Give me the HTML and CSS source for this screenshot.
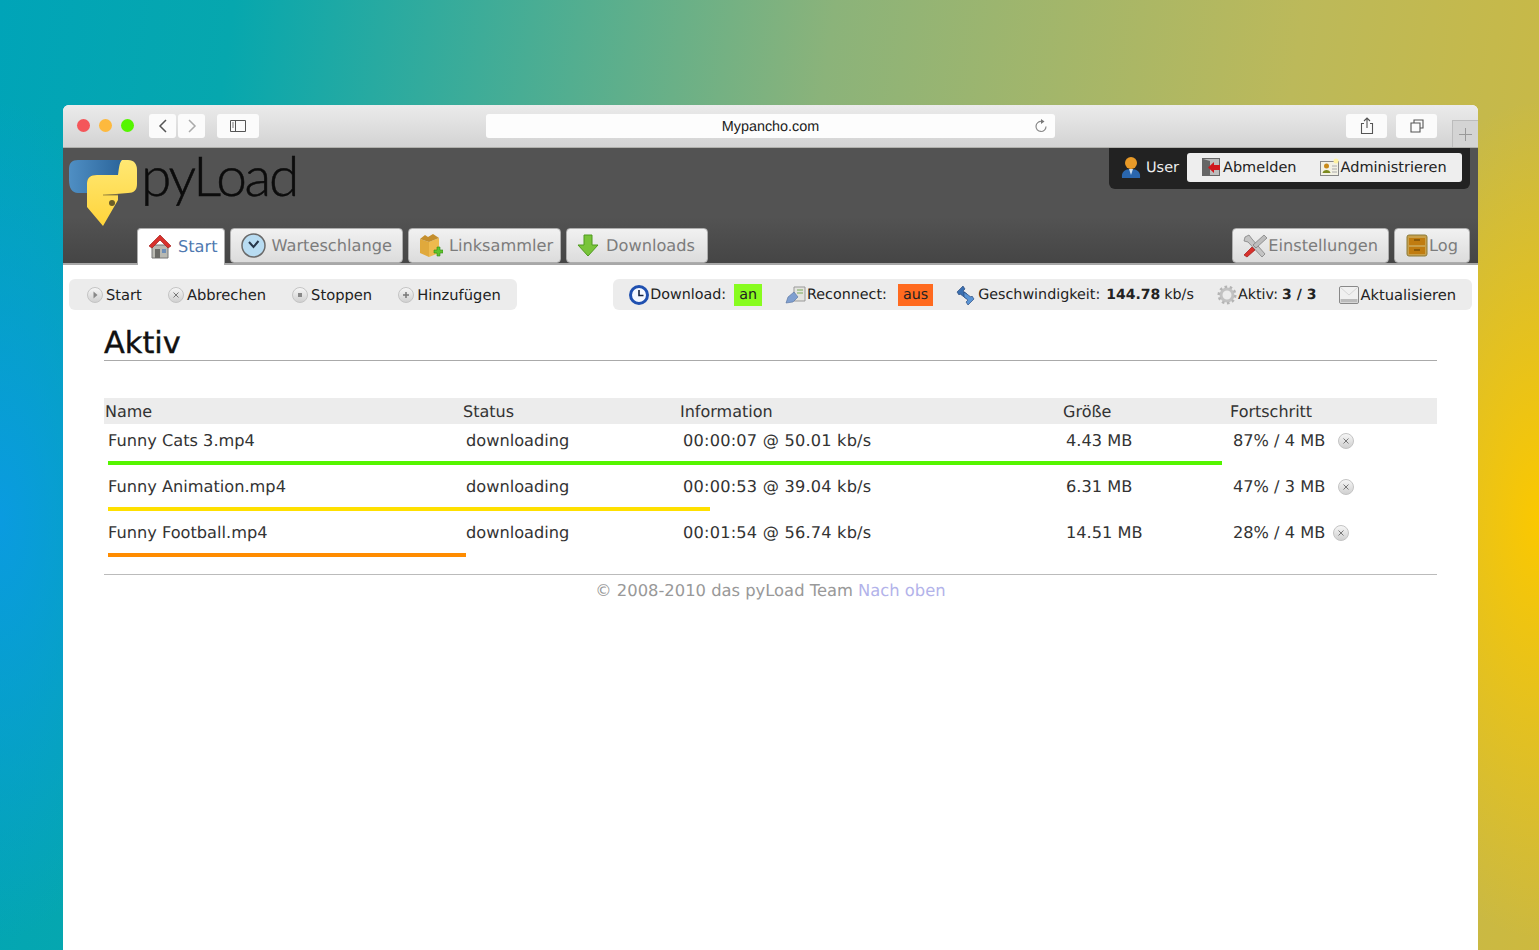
FILE: index.html
```html
<!DOCTYPE html>
<html>
<head>
    <meta charset="utf-8">
    <title>pyLoad</title>
    <link rel="stylesheet" href="styles.css">
</head>
<body>
    <div class="window">
        <div class="titlebar">
            <span class="light red"></span>
            <span class="light yellow"></span>
            <span class="light green"></span>
            <div class="navBtn first"><svg width="12" height="16" viewBox="0 0 12 16"><path d="M9 2 L3 8 L9 14" fill="none" stroke="#555" stroke-width="1.5"/></svg></div>
            <div class="navBtn"><svg width="12" height="16" viewBox="0 0 12 16"><path d="M3 2 L9 8 L3 14" fill="none" stroke="#aaa" stroke-width="1.5"/></svg></div>
            <div class="navBtn sidebar"><svg width="18" height="14" viewBox="0 0 18 14"><path d="M1.5 1.5 H16.5 V12.5 H1.5 Z M6.5 1.5 V12.5" fill="none" stroke="#555" stroke-width="1"/><path d="M3 4 H5 M3 6 H5 M3 8 H5" stroke="#777" stroke-width="1"/></svg></div>
            <div class="address">
                <span class="url">Mypancho.com</span>
                <svg class="reload" width="16" height="16" viewBox="0 0 16 16"><path d="M8.5 3.5 A5 5 0 1 0 13 8.5" fill="none" stroke="#888" stroke-width="1.2"/><path d="M8 1 L11.5 3.5 L8 6 Z" fill="#777"/></svg>
            </div>
            <div class="navBtn share"><svg width="16" height="18" viewBox="0 0 16 18"><path d="M5 6.5 H2.5 V16.5 H13.5 V6.5 H11 M8 11 V1.5 M5 4 L8 1 L11 4" fill="none" stroke="#555" stroke-width="1.1"/></svg></div>
            <div class="navBtn tabsBtn"><svg width="16" height="16" viewBox="0 0 16 16"><path d="M5 4.5 V2 H14 V10 H11 M2 5 H11 V14 H2 Z" fill="none" stroke="#555" stroke-width="1.1"/></svg></div>
            <div class="newTab"><svg width="13" height="13" viewBox="0 0 13 13"><path d="M6.5 0 V13 M0 6.5 H13" stroke="#999" stroke-width="1"/></svg></div>
        </div>

        <div class="header">
            <div class="headTop">
                <div class="logo">
                    <svg width="70" height="68" viewBox="0 0 70 68">
                        <defs>
                            <linearGradient id="pyBlue" x1="0" y1="0" x2="1" y2="0"><stop offset="0" stop-color="#4f8fc4"/><stop offset="1" stop-color="#2a6399"/></linearGradient>
                            <linearGradient id="pyYellow" x1="0" y1="0" x2="0" y2="1"><stop offset="0" stop-color="#ffe873"/><stop offset="1" stop-color="#ffd43b"/></linearGradient>
                        </defs>
                        <path d="M9 0 H55 L51 15 H28 C21 15 18 18 18 24 V33 H9 C3 33 0 28 0 20 V9 C0 3 3 0 9 0 Z" fill="url(#pyBlue)"/>
                        <path d="M53 0 H59 C65 0 68 4 68 10 V24 C68 30 65 33 59 33 L35 35 H49 V40 L34 66 L18 47 V24 C18 18 21 15 28 15 H49 C50 9 50 3 53 0 Z" fill="url(#pyYellow)"/>
                        <path d="M34 35 H49" stroke="#a08a3a" stroke-width="1"/>
                        <circle cx="43" cy="43" r="3" fill="#6a5d2a"/>
                    </svg>
                    <span class="logoText">pyLoad</span>
                </div>
                <div class="login">
                    <svg width="20" height="23" viewBox="0 0 20 23"><path d="M1 22 C0 16 4 13 10 13 C16 13 20 16 19 22 Z" fill="#2a66ad"/><path d="M8 13 L10 19 L12 13 Z" fill="#cfe0f0"/><circle cx="10" cy="7" r="6" fill="#e89a28"/></svg>
                    <span class="loginName">User</span>
                    <div class="loginLinks">
                        <a class="loginLink">
                            <svg width="19" height="19" viewBox="0 0 19 19"><rect x="0.5" y="0.5" width="17" height="17" fill="#bbb" stroke="#666"/><path d="M1 1 L8 3 V18 H1 Z" fill="#666"/><path d="M18 7 H12 V4 L6 9.5 L12 15 V12 H18 Z" fill="#d0161b"/></svg>Abmelden
                        </a>
                        <a class="loginLink">
                            <svg width="20" height="19" viewBox="0 0 20 19"><rect x="0.5" y="3.5" width="18" height="14" fill="#f3f1e4" stroke="#888"/><circle cx="6.5" cy="8" r="2.5" fill="#c98a1a"/><path d="M2.5 15 C3 11 10 11 10.500 15 Z" fill="#7c8a1e"/><path d="M12 8 H17 M12 11 H17 M12 14 H17" stroke="#aaa"/><circle cx="16" cy="3" r="2.500" fill="#fff2a0"/></svg>Administrieren
                        </a>
                    </div>
                </div>
            </div>
            <div class="tabs">
                <a class="tab active">
                    <svg width="24" height="25" viewBox="0 0 24 25"><path d="M4 11 H20 V24 H4 Z" fill="#b9b9b2" stroke="#777"/><rect x="7" y="15" width="5" height="9" fill="#6a6a66"/><rect x="14" y="15" width="4" height="4" fill="#6f8fb8"/><path d="M12 1 L23 12 L20 14 L12 6 L4 14 L1 12 Z" fill="#d8312c" stroke="#a51d1a" stroke-width="0.7"/></svg>
                    Start
                </a>
                <a class="tab">
                    <svg width="25" height="25" viewBox="0 0 25 25"><circle cx="12.500" cy="12.500" r="11.500" fill="#b8dcf2" stroke="#6a6a6a" stroke-width="1.500"/><path d="M8 9 L12.500 14 L17.500 8" fill="none" stroke="#26364a" stroke-width="2"/></svg>
                    Warteschlange
                </a>
                <a class="tab links">
                    <svg width="24" height="25" viewBox="0 0 24 25"><path d="M1 6 L10 9 V24 L1 20 Z" fill="#e0a93c"/><path d="M10 9 L20 5 V20 L10 24 Z" fill="#eeba4e"/><path d="M1 6 L6 2 L9 4 L14 1 L20 5 L10 9 Z" fill="#c48e2c"/><path d="M15 17 H18 V14 H21 V17 H24 V20 H21 V23 H18 V20 H15 Z" fill="#5fc42c" stroke="#2f8a14" stroke-width="0.600"/></svg>
                    Linksammler
                </a>
                <a class="tab downloads">
                    <svg width="22" height="23" viewBox="0 0 22 23"><path d="M7 1 H15 V11 H21 L11 22 L1 11 H7 Z" fill="#79c43a" stroke="#4f9a1e"/></svg>
                    Downloads
                </a>
                <span class="tabGap"></span>
                <a class="tab settings">
                    <svg width="26" height="24" viewBox="0 0 26 24"><path d="M3 3 L7 1 L10 5 L23 20 L20 23 L6 8 L2 7 Z" fill="#c4c4c4" stroke="#777" stroke-width="0.700"/><path d="M22 1 L25 4 L14 14 L11 11 Z" fill="#bdbdbd" stroke="#777" stroke-width="0.700"/><path d="M10 13 L13 16 L5 23 L2 21 Z" fill="#d8312c" stroke="#9c1a18" stroke-width="0.700"/></svg>Einstellungen
                </a>
                <a class="tab log">
                    <svg width="22" height="23" viewBox="0 0 22 23"><rect x="1" y="1" width="20" height="21" rx="2" fill="#c9a04a" stroke="#8a7a3a"/><rect x="3" y="4" width="16" height="7" fill="#c07c10"/><rect x="3" y="13" width="16" height="7" fill="#c07c10"/><path d="M8 6 H14 M8 16 H14" stroke="#5a3a00"/></svg>Log
                </a>
            </div>
        </div>

        <div class="toolRow">
            <div class="toolBar">
                <a class="tool">
                    <svg class="round"><use href="#roundBase"/><path d="M6.500 4.500 L10.500 8 L6.500 11.500 Z" fill="#888"/></svg>Start
                </a>
                <a class="tool">
                    <svg class="round"><use href="#roundBase"/><path d="M5.500 5.500 L10.500 10.500 M10.500 5.500 L5.500 10.500" stroke="#777" stroke-width="1"/></svg>Abbrechen
                </a>
                <a class="tool">
                    <svg class="round"><use href="#roundBase"/><rect x="6" y="6" width="4" height="4" fill="#888"/></svg>Stoppen
                </a>
                <a class="tool">
                    <svg class="round"><use href="#roundBase"/><path d="M8 5 V11 M5 8 H11" stroke="#777" stroke-width="1.500"/></svg>Hinzufügen
                </a>
            </div>
            <div class="toolBar status">
                <span class="stat">
                    <svg width="20" height="20" viewBox="0 0 20 20"><circle cx="10" cy="10" r="8.500" fill="#f4f8ff" stroke="#1f50b0" stroke-width="3"/><path d="M10 5 V10.500 H14.500" fill="none" stroke="#16233f" stroke-width="1.600"/></svg>Download:
                    <em class="flag on">an</em>
                </span>
                <span class="stat">
                    <svg width="21" height="18" viewBox="0 0 21 18"><path d="M9 1 H20 V15 H9 Z" fill="#e4e4e0" stroke="#999"/><path d="M12 4 H18 M12 7 H18" stroke="#7aaa58"/><path d="M1 17 L3 11 L9 6 L13 11 L8 16 Z" fill="#7f9fd0" stroke="#55709c" stroke-width="0.600"/></svg>Reconnect:
                    <em class="flag off">aus</em>
                </span>
                <span class="stat">
                    <svg class="arrows" width="19" height="19" viewBox="0 0 19 19"><path d="M1 6 L7 0 L9 3 L7 5 L11 8 V13 L4 8 L3 9 Z" fill="#3a6fb0" stroke="#1e3e70" stroke-width="0.600"/><path d="M18 13 L12 19 L10 16 L12 14 L8 11 V6 L15 11 L16 10 Z" fill="#5a94d4" stroke="#1e3e70" stroke-width="0.600"/></svg>Geschwindigkeit:<b class="val speed">144.78</b> kb/s
                </span>
                <span class="stat">
                    <svg width="20" height="20" viewBox="0 0 20 20"><circle cx="10" cy="10" r="6" fill="none" stroke="#c2c2c2" stroke-width="3"/><circle cx="10" cy="10" r="8.300" fill="none" stroke="#b4b4b4" stroke-width="2.400" stroke-dasharray="2.600 2.600"/></svg>Aktiv:<b class="val">3 / 3</b>
                </span>
                <span class="stat refresh">
                    <svg width="20" height="18" viewBox="0 0 20 18"><rect x="0.500" y="0.500" width="19" height="17" rx="1.500" fill="#f0f0f0" stroke="#888"/><path d="M1 1 L10 9 L19 1" fill="none" stroke="#d5d5d5"/><rect x="1.500" y="13" width="17" height="3.500" fill="#bbb"/></svg>Aktualisieren
                </span>
            </div>
        </div>

        <div class="content">
            <h1>Aktiv</h1>
            <table class="queue">
                <colgroup>
                    <col class="colName"><col class="colStatus"><col class="colInfo"><col class="colSize"><col class="colProgress">
                </colgroup>
                <thead>
                    <tr><th>Name</th><th>Status</th><th>Information</th><th>Größe</th><th>Fortschritt</th></tr>
                </thead>
                <tbody>
                    <tr class="row">
                        <td>Funny Cats 3.mp4</td><td>downloading</td><td class="info">00:00:07 @ 50.01 kb/s</td><td>4.43 MB</td>
                        <td>87% / 4 MB<svg class="round rowBtn"><use href="#roundBase"/><path d="M5.500 5.500 L10.500 10.500 M10.500 5.500 L5.500 10.500" stroke="#777"/></svg></td>
                    </tr>
                    <tr class="barRow"><td colspan="5"><div class="bar green" style="width: 87%"></div></td></tr>
                    <tr class="row">
                        <td>Funny Animation.mp4</td><td>downloading</td><td class="info">00:00:53 @ 39.04 kb/s</td><td>6.31 MB</td>
                        <td>47% / 3 MB<svg class="round rowBtn"><use href="#roundBase"/><path d="M5.500 5.500 L10.500 10.500 M10.500 5.500 L5.500 10.500" stroke="#777"/></svg></td>
                    </tr>
                    <tr class="barRow"><td colspan="5"><div class="bar gold" style="width: 47%"></div></td></tr>
                    <tr class="row">
                        <td>Funny Football.mp4</td><td>downloading</td><td class="info">00:01:54 @ 56.74 kb/s</td><td>14.51 MB</td>
                        <td>28% / 4 MB<svg class="round rowBtn near"><use href="#roundBase"/><path d="M5.500 5.500 L10.500 10.500 M10.500 5.500 L5.500 10.500" stroke="#777"/></svg></td>
                    </tr>
                    <tr class="barRow"><td colspan="5"><div class="bar orange" style="width: 28%"></div></td></tr>
                </tbody>
            </table>
            <div class="footer">© 2008-2010 das pyLoad Team <a class="topLink">Nach oben</a></div>
        </div>
    </div>

    <svg class="defs" width="0" height="0">
        <defs>
            <linearGradient id="roundFill" x1="0" y1="0" x2="0" y2="1"><stop offset="0" stop-color="#f7f7f7"/><stop offset="1" stop-color="#cfcfcf"/></linearGradient>
            <g id="roundBase"><circle cx="8" cy="8" r="7.500" fill="url(#roundFill)" stroke="#c4c4c4"/></g>
        </defs>
    </svg>
</body>
</html>
```

FILE: styles.css
```css
html, body {
    margin: 0;
    height: 950px;
    overflow: hidden;
}

body {
    font-family: "DejaVu Sans", sans-serif;
    font-size: 14.5px;
    text-rendering: geometricPrecision;
    color: #222;
    padding: 105px 61px 0 63px;
    box-sizing: border-box;
    background:
        radial-gradient(ellipse 170px 420px at 0 520px, #0a9be0 0%, rgba(10,155,224,0) 100%),
        radial-gradient(ellipse 190px 420px at 100% 520px, #fbc800 0%, rgba(251,200,0,0) 100%),
        linear-gradient(98deg, #00a4b8 0%, #06a7ae 14%, #8bb37a 50%, #bcb95a 78%, #cdb93e 100%);
}

svg { flex-shrink: 0; }

.window {
    height: 845px;
    background-color: #fff;
    border-radius: 6px 6px 0 0;
    overflow: hidden;
}

/* browser chrome */
.titlebar {
    display: flex;
    align-items: flex-start;
    height: 43px;
    box-sizing: border-box;
    padding-top: 9px;
    background: linear-gradient(#ebebeb, #d3d3d3);
    border-bottom: 1px solid #b0b0ac;
}

.light {
    width: 13px;
    height: 13px;
    border-radius: 50%;
    margin-top: 5px;
    margin-right: 9px;
}
.light:first-child { margin-left: 14px; }
.red { background-color: #f4565a; }
.yellow { background-color: #fdb93d; }
.green { background-color: #33c748; }

.navBtn {
    display: flex;
    align-items: center;
    justify-content: center;
    width: 27px;
    height: 24px;
    margin-right: 2px;
    background-color: #fbfbfb;
    border-radius: 3px;
}
.navBtn.first { margin-left: 6px; }
.navBtn.sidebar { width: 42px; margin-left: 10px; margin-right: 0; }
.navBtn.share { width: 41px; margin-left: 291px; margin-right: 9px; }
.navBtn.tabsBtn { width: 41px; margin-right: 15px; }

.address {
    display: flex;
    align-items: center;
    position: relative;
    justify-content: center;
    width: 569px;
    height: 24px;
    margin-left: 227px;
    background-color: #fdfdfd;
    border-radius: 3px;
}
.url {
    font-family: "Liberation Sans", sans-serif;
    font-size: 14.4px;
    color: #222;
    margin-top: 2px;
}
.reload {
    position: absolute;
    right: 6px;
    top: 4px;
}

.newTab {
    display: flex;
    align-items: center;
    justify-content: center;
    width: 26px;
    height: 27px;
    margin-top: 6px;
    background-color: #d4d4d4;
    border: 1px solid #bcbcbc;
    border-right: 0;
    border-bottom: 0;
    box-sizing: border-box;
}

/* pyload header */
.header {
    height: 115px;
    background: linear-gradient(#535353 0%, #535353 60%, #454545 100%);
    border-bottom: 2px solid #a8a8a8;
}

.headTop {
    display: flex;
    justify-content: space-between;
    height: 80px;
    padding: 0 8px 0 6px;
}

.logo {
    display: flex;
    align-items: flex-start;
    padding-top: 12px;
}
.logoText {
    font-family: "Lato", sans-serif;
    font-weight: 300;
    font-size: 55px;
    line-height: 50px;
    color: #0c0c0c;
    margin: -10px 0 0 2px;
    letter-spacing: -2.2px;
    -webkit-text-stroke: 0.5px #0c0c0c;
}

.login {
    display: flex;
    align-items: center;
    height: 41px;
    width: 361px;
    box-sizing: border-box;
    padding: 5px 8px 7px 12px;
    background-color: #222;
    border-radius: 0 0 6px 6px;
}
.loginName {
    width: 34px;
    color: #eee;
    margin-left: 5px;
    margin-right: 7px;
}
.loginLinks {
    display: flex;
    align-items: center;
    flex: 1;
    height: 29px;
    padding-left: 15px;
    background-color: #eee;
    border-radius: 3px;
}
.loginLink {
    display: flex;
    align-items: center;
    gap: 2px;
    margin-right: 23px;
    color: #222;
}
.loginLink:last-child { margin-right: 0; gap: 1px; }

.tabs {
    display: flex;
    align-items: flex-start;
    gap: 5px;
    padding: 0 8px 0 74px;
}
.tabGap { flex: 1; }

.tab {
    display: flex;
    align-items: center;
    gap: 6px;
    height: 35px;
    box-sizing: border-box;
    padding: 0 10px;
    font-size: 16.2px;
    color: #7c7c7c;
    background: linear-gradient(#f1f1f1, #dcdcdc);
    border: 1px solid #adadad;
    border-radius: 4px;
}
.tab.active {
    height: 37px;
    padding: 0 6px 2px 10px;
    color: #4f79b0;
    background: #fff;
    border-bottom: 0;
    border-radius: 4px 4px 0 0;
}
.tab.links { padding-right: 7px; }
.tab.downloads { gap: 7px; padding-right: 12px; }
.tab.settings { gap: 0; padding: 0 10px 0 9px; }
.tab.log { gap: 1px; padding: 0 11px; }

/* toolbars */
.toolRow {
    display: flex;
    justify-content: space-between;
    padding: 14px 6px 0 6px;
}

.toolBar {
    display: flex;
    align-items: center;
    height: 31px;
    box-sizing: border-box;
    padding: 1px 16px 0 18px;
    gap: 26px;
    font-size: 14.7px;
    background-color: #ececec;
    border-radius: 6px;
}
.toolBar.status {
    gap: 23px;
    padding-left: 16px;
    font-size: 14.3px;
}

.tool, .stat {
    display: flex;
    align-items: center;
    color: #222;
}
.stat.refresh { font-size: 14.7px; }

.round {
    width: 16px;
    height: 16px;
    margin-right: 3px;
}

.stat svg { margin-right: 1px; }
.stat svg.arrows { margin-right: 3px; }

.flag {
    font-style: normal;
    height: 22px;
    line-height: 22px;
    padding: 0 5px;
    margin-left: 8px;
    color: #222;
}
.on { background-color: #88fc1f; }
.off {
    margin-left: 11px;
    background-color: #ff6a1f;
}
.val {
    margin-left: 4px;
    font-size: 14px;
}
.val.speed {
    margin-left: 6px;
    margin-right: 4px;
}

/* content */
.content {
    padding: 0 41px;
}

h1 {
    margin: 16px 0 37px 0;
    height: 34px;
    line-height: 35px;
    font-size: 30.4px;
    font-weight: 500;
    color: #111;
    -webkit-text-stroke: 0.4px #111;
    border-bottom: 1px solid #aaa;
}

.queue {
    width: 1333px;
    table-layout: fixed;
    border-collapse: collapse;
}
.colName { width: 358px; }
.colStatus { width: 217px; }
.colInfo { width: 383px; }
.colSize { width: 167px; }
.colProgress { width: 208px; }

.queue th {
    height: 26px;
    padding: 0 0 0 1px;
    font-weight: normal;
    text-align: left;
    font-size: 16px;
    color: #333;
    background-color: #ececec;
}

.row td {
    height: 28px;
    padding: 2px 0 0 4px;
    font-size: 16.2px;
    color: #333;
}
.row td.info { letter-spacing: 0.2px; }

.barRow td {
    height: 16px;
    padding: 0 49px 0 4px;
    vertical-align: top;
}

.bar {
    height: 4px;
    margin-top: 7px;
}
.green { background-color: #55f500; }
.gold { background-color: #ffe000; }
.orange { background-color: #ff8c00; }

.rowBtn {
    margin: 0 0 0 13px;
    vertical-align: -3px;
}
.rowBtn.near { margin-left: 8px; }

.footer {
    margin-top: 12px;
    padding-top: 6px;
    border-top: 1px solid #bbb;
    text-align: center;
    font-size: 16.35px;
    color: #999;
}
.topLink { color: #b3b3ea; }

.defs { position: absolute; }
```
